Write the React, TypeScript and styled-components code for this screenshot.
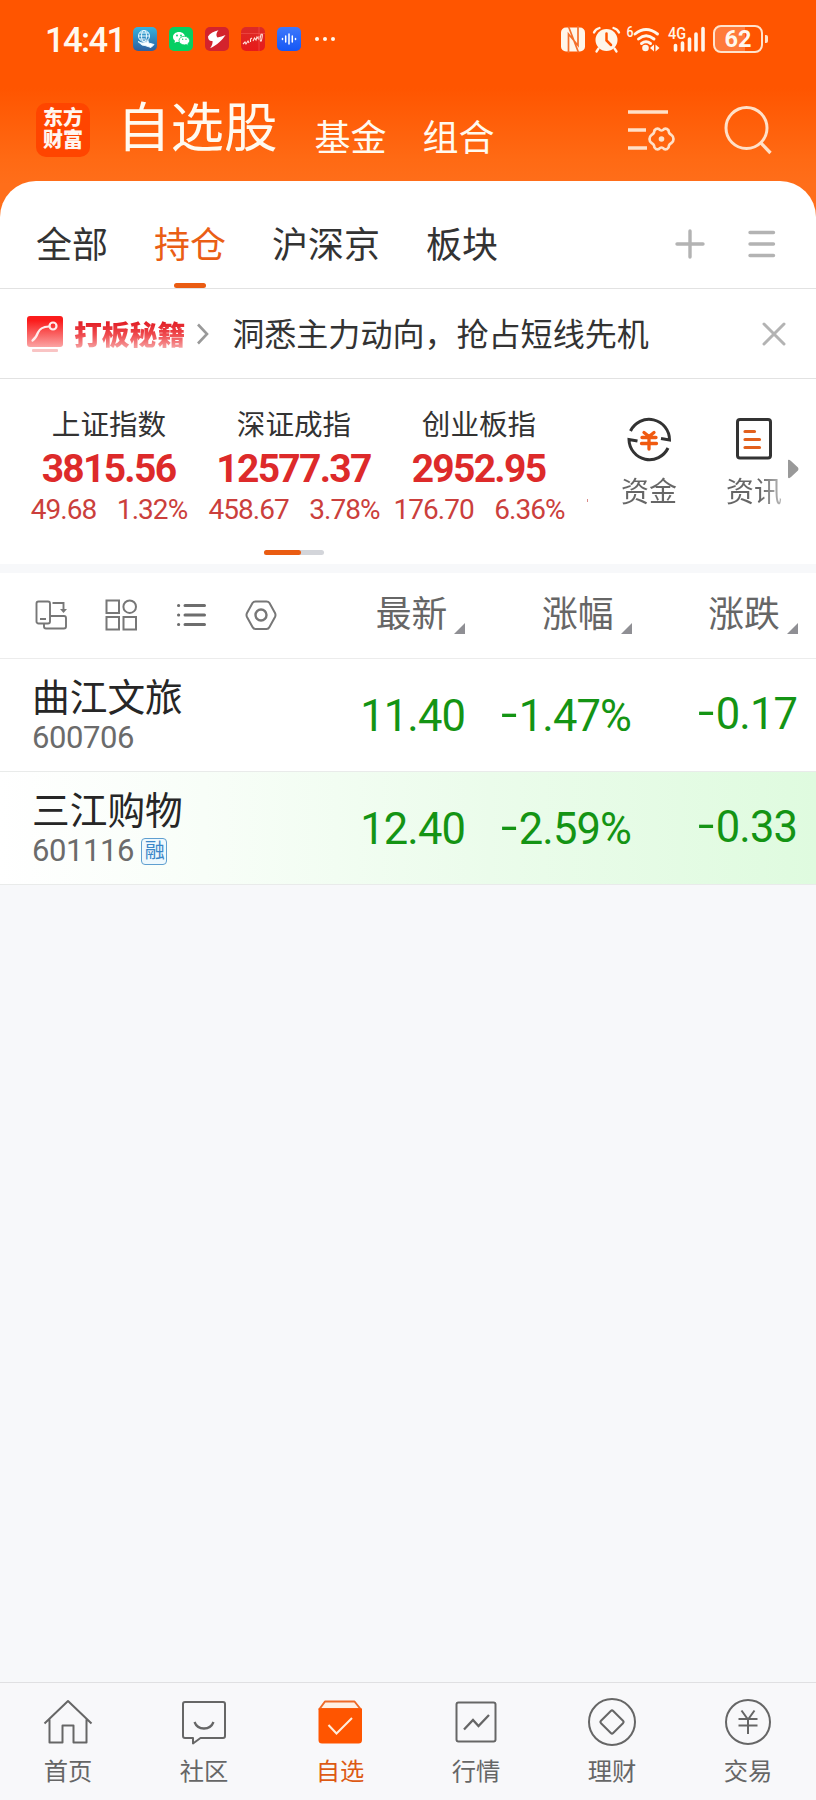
import React from 'react';
import styled, { createGlobalStyle } from 'styled-components';

const cjk = `'Noto Sans CJK SC', 'Noto Sans', sans-serif`;
const num = `Roboto, 'Noto Sans CJK SC', sans-serif`;

const GlobalStyle = createGlobalStyle`
  *, *::before, *::after { box-sizing: border-box; }
  html, body { margin: 0; padding: 0; background: #f7f8fa; }
  body { font-family: ${cjk}; color: #333; }
  svg { display: block; flex: none; overflow: visible; }
`;

const Screen = styled.div`
  width: 816px;
  height: 1800px;
  display: flex;
  flex-direction: column;
  overflow: hidden;
  background: linear-gradient(180deg, #ff5500 0, #ff5500 88px, #ff6a14 160px, #ff6e1a 184px, #ff6e1a 240px, #f7f8fa 240px);
`;

/* ---------- status bar ---------- */
const StatusBar = styled.div`
  flex: none;
  height: 78px;
  padding: 0 48px 0 45px;
  display: flex;
  align-items: center;
  color: #fff8ee;
`;
const Clock = styled.span`
  width: 88px;
  font: 500 34.5px/40px ${num};
  letter-spacing: -1.6px;
  padding-top: 2px;
`;
const AppIcons = styled.div`
  display: flex;
  gap: 12px;
`;
const AppIcon = styled.div<{ $bg: string }>`
  width: 24px;
  height: 24px;
  border-radius: 5px;
  background: ${(p) => p.$bg};
`;
const Dots = styled.div`
  display: flex;
  gap: 4px;
  margin-left: 14px;
  i { width: 4px; height: 4px; border-radius: 50%; background: #fff8ee; }
`;
const StatusRight = styled.div`
  margin-left: auto;
  display: flex;
  align-items: center;
`;
const Battery = styled.div`
  position: relative;
  width: 50px;
  height: 28px;
  margin: 0 5px 0 8px;
  border: 2px solid #ffe3cc;
  border-radius: 8px;
  background: linear-gradient(90deg, #ff7a3a 66%, transparent 66%);
  font: 700 23.5px/25px ${num};
  text-align: center;
  &::after {
    content: '';
    position: absolute;
    right: -7px;
    top: 8px;
    width: 3px;
    height: 8px;
    border-radius: 0 2px 2px 0;
    background: #ffe3cc;
  }
`;

/* ---------- app header ---------- */
const Header = styled.header`
  flex: none;
  height: 103px;
  padding: 0 44px 0 36px;
  display: flex;
  align-items: center;
  color: #fffaf0;
`;
const Logo = styled.div`
  width: 54px;
  height: 54px;
  border-radius: 10px;
  background: #ff4500;
  display: flex;
  flex-direction: column;
  align-items: center;
  padding-top: 3px;
  font: 900 20px/22.5px ${cjk};
  color: #fff6f0;
`;
const Title = styled.h1`
  margin: -11px 0 0 27px;
  font: 400 53.5px/60px ${cjk};
`;
const HeaderLink = styled.span<{ $gap: number }>`
  margin: 11px 0 0 ${(p) => p.$gap}px;
  font: 400 36px/40px ${cjk};
`;
const HeaderTools = styled.div`
  margin-left: auto;
  display: flex;
  align-items: center;
  gap: 49px;
`;

/* ---------- watchlist groups ---------- */
const Panel = styled.div`
  flex: none;
  background: #fff;
  border-radius: 36px 36px 0 0;
`;
const GroupTabs = styled.div`
  height: 108px;
  padding: 0 39px 0 36px;
  display: flex;
  align-items: stretch;
  gap: 46px;
  border-bottom: 1px solid #e2e2e2;
`;
const GroupTab = styled.div<{ $active?: boolean }>`
  display: flex;
  flex-direction: column;
  align-items: center;
  padding-top: 36px;
  font: 400 36px/50px ${cjk};
  color: ${(p) => (p.$active ? '#ea5e15' : '#333')};
  &::after {
    content: '';
    width: 32px;
    height: 5px;
    margin-top: 16px;
    border-radius: 3px;
    background: ${(p) => (p.$active ? '#ea5c12' : 'transparent')};
  }
`;
const GroupTools = styled.div`
  margin: 18px 0 0 auto;
  display: flex;
  align-items: center;
  gap: 42px;
`;

/* ---------- promo strip ---------- */
const Promo = styled.div`
  height: 90px;
  padding: 0 30px 0 27px;
  display: flex;
  align-items: center;
  border-bottom: 1px solid #e2e2e2;
`;
const PromoBrand = styled.span`
  margin: -2px 12px 0 11px;
  font: 900 27.8px/36px ${cjk};
  background: linear-gradient(180deg, #e01820 15%, #ef4a4e 55%, #f6a8a8 95%);
  -webkit-background-clip: text;
  background-clip: text;
  color: transparent;
`;
const PromoText = styled.span`
  margin: -4px 0 0 23px;
  font: 400 32.05px/44px ${cjk};
  flex: 1;
`;

/* ---------- indices ---------- */
const Indices = styled.section`
  height: 185px;
  padding-top: 26px;
  display: flex;
  position: relative;
`;
const IndexCard = styled.div`
  width: 185px;
  display: flex;
  flex-direction: column;
  align-items: center;
  white-space: nowrap;
`;
const IndexCards = styled.div`
  display: flex;
  width: 588px;
  padding-left: 16.5px;
`;
const IndexName = styled.div`
  font: 400 28.6px/36px ${cjk};
`;
const IndexValue = styled.div`
  margin-top: 6px;
  font: 700 39px/44px ${num};
  letter-spacing: -1.7px;
  padding-right: 1px;
  color: #dd2a2a;
`;
const IndexChange = styled.div`
  margin-top: 1px;
  display: flex;
  gap: 20.5px;
  font: 400 28px/36px ${num};
  letter-spacing: -0.95px;
  color: #cb3f3c;
`;
const NextCardHint = styled.i`
  width: 1px;
  height: 3px;
  margin: 94px 0 0 auto;
  background: #d98a88;
`;
const Pager = styled.div`
  position: absolute;
  left: 264px;
  top: 171px;
  width: 60px;
  height: 5px;
  border-radius: 3px;
  background: #d3d5da;
  &::before {
    content: '';
    display: block;
    width: 37px;
    height: 5px;
    border-radius: 3px;
    background: #ea5c12;
  }
`;
const Shortcuts = styled.div`
  display: flex;
  padding: 9.5px 0 0 33px;
  gap: 49px;
`;
const Shortcut = styled.div<{ $fade?: boolean }>`
  width: 56px;
  display: flex;
  flex-direction: column;
  align-items: center;
  gap: 9px;
  white-space: nowrap;
  font: 400 28px/36px ${cjk};
  span {
    background: linear-gradient(90deg, #666 ${(p) => (p.$fade ? '60%' : '100%')}, #bbb);
    -webkit-background-clip: text;
    background-clip: text;
    color: transparent;
  }
`;
const MoreArrow = styled.svg`
  margin: 44px 0 0 -43.5px;
`;
const Band = styled.div`
  height: 9px;
  background: #f7f8fa;
`;

/* ---------- quotes table ---------- */
const TableHead = styled.div`
  height: 86px;
  padding-left: 35px;
  display: flex;
  align-items: center;
  border-bottom: 1px solid #ececec;
`;
const ViewTools = styled.div`
  width: 264px;
  display: flex;
  gap: 36px;
  margin-top: -2px;
`;
const SortColumn = styled.div`
  width: 166.3px;
  display: flex;
  justify-content: flex-end;
  align-items: flex-end;
  gap: 7px;
  font: 400 35.8px/48px ${cjk};
  color: #666;
  margin-top: -10px;
  svg { margin-bottom: 1px; }
`;
const Row = styled.div<{ $flash?: boolean }>`
  height: 113px;
  padding-left: 32px;
  display: flex;
  border-bottom: 1px solid #e9ebea;
  background: ${(p) =>
    p.$flash ? 'linear-gradient(90deg, #ffffff 0%, #f8fef8 25%, #ebfceb 60%, #dffbdf 100%)' : '#fff'};
`;
const Stock = styled.div`
  width: 267px;
  padding-top: 12px;
`;
const StockName = styled.div`
  font: 400 37.7px/48px ${cjk};
  color: #262626;
`;
const StockCode = styled.div`
  display: flex;
  align-items: center;
  gap: 7px;
  margin-top: 1px;
  font: 400 31px/36px ${num};
  letter-spacing: -0.4px;
  color: #6b6b6b;
`;
const MarginBadge = styled.span`
  width: 26px;
  height: 27px;
  border: 1.5px solid #5f9fd0;
  border-radius: 4px;
  background: #eef8fd;
  font: 400 20px/22px ${cjk};
  letter-spacing: 0;
  text-align: center;
  text-indent: 1px;
  color: #3a86c8;
`;
const Figure = styled.div<{ $up?: boolean }>`
  width: 166px;
  padding-top: ${(p) => (p.$up ? 34 : 36)}px;
  font: 400 43.5px/44px ${num};
  letter-spacing: -0.9px;
  text-align: right;
  color: #149414;
  white-space: nowrap;
`;
const Minus = styled.span`
  display: inline-block;
  margin-right: 4.5px;
  transform: translateY(-2px) scaleX(1.35);
`;

/* ---------- bottom navigation ---------- */
const Blank = styled.main`
  flex: 1;
  background: #f7f8fa;
`;
const BottomNav = styled.nav`
  flex: none;
  height: 118px;
  display: flex;
  background: #f8f8fa;
  border-top: 1px solid #e0e0e2;
`;
const NavItem = styled.div<{ $active?: boolean }>`
  flex: 1;
  display: flex;
  flex-direction: column;
  align-items: center;
  padding-top: 14px;
  font: 400 24.3px/32px ${cjk};
  color: ${(p) => (p.$active ? '#dd5a14' : '#666')};
  svg { margin-bottom: 7px; }
`;

const Corner = () => (
  <svg width="11" height="11" viewBox="0 0 11 11"><path d="M11 0V11H0Z" fill="#8f8f94" /></svg>
);

const indices = [
  { name: '上证指数', value: '3815.56', diff: '49.68', pct: '1.32%' },
  { name: '深证成指', value: '12577.37', diff: '458.67', pct: '3.78%' },
  { name: '创业板指', value: '2952.95', diff: '176.70', pct: '6.36%' },
];

const stocks = [
  { name: '曲江文旅', code: '600706', price: '11.40', pct: '1.47%', diff: '0.17', margin: false },
  { name: '三江购物', code: '601116', price: '12.40', pct: '2.59%', diff: '0.33', margin: true },
];

const navIcon = { width: 50, height: 50, viewBox: '0 0 50 50', fill: 'none', stroke: '#666', strokeWidth: 2 } as const;

const navItems = [
  {
    label: '首页',
    icon: (
      <svg {...navIcon}>
        <path d="M1.500 26.500 25 4 48.500 26.500M6.500 22.500V45.500H19.500V28.500H30.500V45.500H43.500V22.500" strokeLinejoin="round" />
      </svg>
    ),
  },
  {
    label: '社区',
    icon: (
      <svg {...navIcon}>
        <path d="M6 5H44Q46 5 46 7V39Q46 41 44 41H21.500L14 46.500V41H6Q4 41 4 39V7Q4 5 6 5Z" strokeLinejoin="round" />
        <path d="M15.500 25Q18 31.500 25 31.500T34.500 25" strokeWidth="2.300" />
      </svg>
    ),
  },
  {
    label: '自选',
    active: true,
    icon: (
      <svg {...navIcon} stroke="none">
        <path d="M10 4.500H39.500L45.500 12H4.500Z" fill="#fff0e4" stroke="#ee6a28" strokeLinejoin="round" />
        <path d="M3.500 11.500H47V43Q47 46.500 43.500 46.500H7Q3.500 46.500 3.500 43Z" fill="#ff5500" />
        <path d="M13.500 28 21.500 36.500 37 21" stroke="#ffeedd" />
      </svg>
    ),
  },
  {
    label: '行情',
    icon: (
      <svg {...navIcon}>
        <rect x="5.500" y="5.500" width="39" height="39" rx="2" />
        <path d="M13 32.500 22 23 27.500 29 38 18" strokeWidth="2.300" />
      </svg>
    ),
  },
  {
    label: '理财',
    icon: (
      <svg {...navIcon}>
        <circle cx="25" cy="25" r="23" />
        <path d="M23.800 14 14 23.800Q12.800 25 14 26.200L23.800 36Q25 37.200 26.200 36L36 26.200Q37.200 25 36 23.800L26.200 14Q25 12.800 23.800 14Z" />
      </svg>
    ),
  },
  {
    label: '交易',
    icon: (
      <svg {...navIcon}>
        <circle cx="25" cy="25" r="22" />
        <path d="M18.500 13.500 25 22.500 31.500 13.500M25 22.500V37M15.500 22H34.500M15.500 28.500H34.500" />
      </svg>
    ),
  },
];

export default function App() {
  return (
    <Screen>
      <GlobalStyle />
      <StatusBar>
        <Clock>14:41</Clock>
        <AppIcons>
          <AppIcon $bg="linear-gradient(180deg,#36b2df,#2f5f9e)">
            <svg width="24" height="24" viewBox="0 0 24 24" fill="none" stroke="#e8f8ff" strokeWidth="1">
              <circle cx="11" cy="9" r="5.500" />
              <ellipse cx="11" cy="9" rx="2.500" ry="5.500" />
              <path d="M5.500 9H16.500M6.500 6H15.500M6.500 12H12" />
              <path d="M5 14.500 9 16 13 15.500 15 13.500 15.500 16 21 17.500 18 20.500 12 18.500 9 18Z" fill="#fff" />
            </svg>
          </AppIcon>
          <AppIcon $bg="#06cf62">
            <svg width="24" height="24" viewBox="0 0 24 24">
              <path d="M10 5C6.500 5 4 7.200 4 10c0 1.600.8 2.900 2 3.800L5.500 16l2.400-1.200c3 .8 8.100-.8 8.100-4.800 0-2.800-2.500-5-6-5Z" fill="#fff" />
              <path d="M15.300 9.300c-3 0-5.300 1.900-5.300 4.300s2.300 4.300 5.300 4.300c.7 0 1.400-.1 2-.3l2 1-.5-1.800c1.100-.8 1.800-1.900 1.800-3.200 0-2.400-2.300-4.300-5.300-4.300Z" fill="#fff" stroke="#06cf62" strokeWidth=".8" />
              <g fill="#06cf62"><circle cx="8" cy="8.500" r=".9" /><circle cx="12" cy="8.500" r=".9" /><circle cx="13.700" cy="12.300" r=".7" /><circle cx="17" cy="12.300" r=".7" /></g>
            </svg>
          </AppIcon>
          <AppIcon $bg="#d3232d">
            <svg width="24" height="24" viewBox="0 0 24 24">
              <path d="M3 9.500C5 6 9 4.500 13.500 3.300C11 6 11 8.800 12.500 10.500C15 10 18 9 20.500 8C17.500 13 12 18 5.200 21.200C7 18.500 7.800 16.500 7.500 14C4.500 14.500 3 12.500 3 9.500Z" fill="#fff" />
            </svg>
          </AppIcon>
          <AppIcon $bg="linear-gradient(180deg,#dc2b27,#e81a1a)">
            <svg width="24" height="24" viewBox="0 0 24 24" fill="none" stroke="#ffe4dc" strokeWidth="1.100">
              <path d="M2 17 4 15 5 17 7 14 8 16M9.500 15V12L11 11M12 14 13.500 11 15 13 16 10 17.500 12 18 9M20 7.500Q22 5 21 11T19 12Z" />
              <path d="M0 6.500H24M18 0V24" stroke="#f0504a" strokeWidth=".7" />
            </svg>
          </AppIcon>
          <AppIcon $bg="linear-gradient(180deg,#3e78fb,#1557f5)">
            <svg width="24" height="24" viewBox="0 0 24 24" stroke="#fff" strokeWidth="1.500" strokeLinecap="round">
              <path d="M5.500 11.500V12.500M8.700 9V15M12 7V17M15.300 9V15M18.500 11.500V12.500" />
            </svg>
          </AppIcon>
        </AppIcons>
        <Dots><i /><i /><i /></Dots>
        <StatusRight>
          <svg width="144" height="30" viewBox="0 0 144 30" fill="none" stroke="#fff6ea" strokeLinecap="round">
            <rect x="0" y="3.500" width="24" height="24" rx="5" fill="#fff6ea" stroke="none" />
            <path d="M7.500 29V10L17 21.500V2M7.500 2.500 17.500 28.500" stroke="#f4702c" strokeWidth="1.700" strokeLinecap="butt" />
            <circle cx="45.500" cy="16" r="11" fill="#fff6ea" stroke="none" />
            <path d="M45.500 9.500V16.500L50 21" stroke="#ff5500" strokeWidth="2.500" />
            <path d="M33 8.500Q34.500 5 38.500 4M52.500 4Q56.500 5 58 8.500M37.500 24.500 35.500 27.500M53.500 24.500 55.500 27.500" strokeWidth="2.300" />
            <path d="M75.500 10Q86.500 1 98 10M79 15Q86.500 8.500 94.500 15M82 19.500Q86.500 16 91 19.500" transform="translate(-1.500 0)" strokeWidth="2.900" />
            <circle cx="84.500" cy="24" r="3.300" fill="#fff6ea" stroke="none" />
            <path d="M93 20.500V27.500L89 24ZM94.500 20.500V27.500L98.500 24Z" fill="#fff6ea" stroke="none" />
            <path d="M114.500 21.500V26M121.500 19V26M128.500 15V26M135 10V26M142 4.500V26" strokeWidth="3.600" />
            <text x="65.500" y="13" fill="#fff6ea" stroke="none" fontFamily="Roboto" fontSize="14" fontWeight="500" textLength="7" lengthAdjust="spacingAndGlyphs">6</text>
            <text x="107" y="14.500" fill="#fff6ea" stroke="none" fontFamily="Roboto" fontSize="16.500" fontWeight="500" textLength="18" lengthAdjust="spacingAndGlyphs">4G</text>
          </svg>
          <Battery>62</Battery>
        </StatusRight>
      </StatusBar>

      <Header>
        <Logo><span>东方</span><span>财富</span></Logo>
        <Title>自选股</Title>
        <HeaderLink $gap={37}>基金</HeaderLink>
        <HeaderLink $gap={36}>组合</HeaderLink>
        <HeaderTools>
          <svg width="48" height="46" viewBox="0 0 48 46" fill="none" stroke="#ffe0c8" strokeWidth="3.300">
            <path d="M1 5H41M1 23H19M1 41H20" />
            <path d="M29 22Q31.500 21 33 23Q34.500 24 36 23Q37.500 21 40 22Q42 23 42 25.500Q42.500 27 44.500 28Q46.500 29.500 46.500 32Q46.500 34.500 44.500 36Q42.500 37 42 38.500Q42 41 40 42Q37.500 43 36 41Q34.500 40 33 41Q31.500 43 29 42Q27 41 27 38.500Q26.500 37 24.500 36Q22.500 34.500 22.500 32Q22.500 29.500 24.500 28Q26.500 27 27 25.500Q27 23 29 22Z" strokeWidth="2.700" />
            <circle cx="34.500" cy="32" r="2.800" fill="#ffe0c8" stroke="none" />
          </svg>
          <svg width="48" height="48" viewBox="0 0 48 48" fill="none" stroke="#ffe0c8" strokeWidth="3">
            <circle cx="22.500" cy="22" r="20.500" />
            <path d="M36.500 36.500 46.500 47" strokeWidth="3.300" />
          </svg>
        </HeaderTools>
      </Header>

      <Panel>
        <GroupTabs>
          <GroupTab>全部</GroupTab>
          <GroupTab $active>持仓</GroupTab>
          <GroupTab>沪深京</GroupTab>
          <GroupTab>板块</GroupTab>
          <GroupTools>
            <svg width="30" height="30" viewBox="0 0 30 30" stroke="#b3b3b3" strokeWidth="3.400" strokeLinecap="round">
              <path d="M15 2V28M2 15H28" />
            </svg>
            <svg width="30" height="30" viewBox="0 0 30 30" stroke="#b3b3b3" strokeWidth="3.400" strokeLinecap="round">
              <path d="M3 3.500H26.500M3 15H26.500M3 26.500H26.500" />
            </svg>
          </GroupTools>
        </GroupTabs>

        <Promo>
          <svg width="36" height="38" viewBox="0 0 36 38">
            <defs>
              <linearGradient id="promo" x1="0" y1="0" x2="0" y2="1">
                <stop offset=".15" stopColor="#fb1c1c" />
                <stop offset=".6" stopColor="#f96464" />
                <stop offset="1" stopColor="#fba4a4" />
              </linearGradient>
            </defs>
            <rect y="1" width="36" height="31" rx="3" fill="url(#promo)" />
            <rect x="5" y="34" width="26" height="3" rx="1" fill="#f9c4c4" />
            <path d="M5.500 25.500Q9 23 11 17.500T22 11.500" fill="none" stroke="#ffecec" strokeWidth="2.200" strokeLinecap="round" />
            <circle cx="26" cy="11" r="3.500" fill="none" stroke="#ffecec" strokeWidth="2.200" />
          </svg>
          <PromoBrand>打板秘籍</PromoBrand>
          <svg width="12" height="22" viewBox="0 0 12 22" fill="none" stroke="#999" strokeWidth="2.600"><path d="M1 1.500 10 11 1 20.500" /></svg>
          <PromoText>洞悉主力动向，抢占短线先机</PromoText>
          <svg width="24" height="24" viewBox="0 0 24 24" stroke="#b3b3b3" strokeWidth="3" strokeLinecap="round"><path d="M2 2 22 22M22 2 2 22" /></svg>
        </Promo>

        <Indices>
          <IndexCards>
            {indices.map((i) => (
              <IndexCard key={i.name}>
                <IndexName>{i.name}</IndexName>
                <IndexValue>{i.value}</IndexValue>
                <IndexChange><span>{i.diff}</span><span>{i.pct}</span></IndexChange>
              </IndexCard>
            ))}
            <NextCardHint />
          </IndexCards>
          <Shortcuts>
            <Shortcut>
              <svg width="46" height="48" viewBox="0 0 46 48" fill="none" stroke="#333" strokeWidth="3">
                <path d="M4.500 16A20.500 20.500 0 0 1 43.500 25L35 23.500M42 33A20.500 20.500 0 0 1 3 24.500L11.500 26" />
                <path d="M18 17.500 23 21.500 28 17.500M23 21.500V34M16 22.500H30M15.500 28.500H30.500" stroke="#f05a10" strokeWidth="3.300" strokeLinecap="round" />
              </svg>
              <span>资金</span>
            </Shortcut>
            <Shortcut $fade>
              <svg width="36" height="48" viewBox="0 0 36 48" fill="none" stroke="#333" strokeWidth="3">
                <rect x="1.500" y="4.500" width="33" height="38.500" rx="2.500" />
                <path d="M9 16.500H18.500M9 24.500H23.500M9 32.500H23.500" stroke="#e2601c" strokeWidth="3.200" strokeLinecap="round" />
              </svg>
              <span>资讯</span>
            </Shortcut>
            <MoreArrow width="11" height="20" viewBox="0 0 11 20" fill="#999"><path d="M0 1Q1 0 3 2L10 8.500Q11 10 10 11.500L3 18Q1 20 0 18.500Z" /></MoreArrow>
          </Shortcuts>
          <Pager />
        </Indices>
        <Band />

        <TableHead>
          <ViewTools>
            <svg width="34" height="34" viewBox="0 0 34 34" fill="none" stroke="#777" strokeWidth="1.900">
              <rect x="1.500" y="3.500" width="13.500" height="22" rx="2" />
              <path d="M5 21H11M17.500 5H28.500V12M15 18H29Q31 18 31 20V28.500Q31 30.500 29 30.500H11Q9 30.500 9 28.500V25.500" />
              <path d="M25 11H32L28.500 15Z" fill="#777" stroke="none" />
            </svg>
            <svg width="34" height="34" viewBox="0 0 34 34" fill="none" stroke="#777" strokeWidth="2">
              <rect x="1.500" y="2.500" width="12.500" height="12.500" />
              <rect x="1.500" y="19" width="12.500" height="12.500" />
              <rect x="18.500" y="19" width="12.500" height="12.500" />
              <circle cx="24.700" cy="8.700" r="6.300" />
            </svg>
            <svg width="34" height="34" viewBox="0 0 34 34" fill="none" stroke="#6d6d6d" strokeWidth="3" strokeLinecap="round">
              <path d="M10 7.500H29.500M10 17H29.500M10 26.500H29.500M3.500 7.500H3.700M3.500 17H3.700M3.500 26.500H3.700" />
            </svg>
            <svg width="34" height="34" viewBox="0 0 34 34" fill="none" stroke="#777" strokeWidth="2">
              <path d="M10.500 3.500H21.500Q23.500 3.500 24.500 5L30 15Q31 17 30 19L24.500 29Q23.500 31 21.500 31H10.500Q8.500 31 7.500 29L2 19Q1 17 2 15L7.500 5Q8.500 3.500 10.500 3.500Z" />
              <circle cx="16" cy="17" r="5.500" strokeWidth="2.400" />
            </svg>
          </ViewTools>
          {['最新', '涨幅', '涨跌'].map((label) => (
            <SortColumn key={label}>{label}<Corner /></SortColumn>
          ))}
        </TableHead>

        {stocks.map((s) => (
          <Row key={s.code} $flash={s.margin}>
            <Stock>
              <StockName>{s.name}</StockName>
              <StockCode>{s.code}{s.margin && <MarginBadge>融</MarginBadge>}</StockCode>
            </Stock>
            <Figure>{s.price}</Figure>
            <Figure><Minus>-</Minus>{s.pct}</Figure>
            <Figure $up><Minus>-</Minus>{s.diff}</Figure>
          </Row>
        ))}
      </Panel>

      <Blank />

      <BottomNav>
        {navItems.map((n) => (
          <NavItem key={n.label} $active={n.active}>{n.icon}{n.label}</NavItem>
        ))}
      </BottomNav>
    </Screen>
  );
}
